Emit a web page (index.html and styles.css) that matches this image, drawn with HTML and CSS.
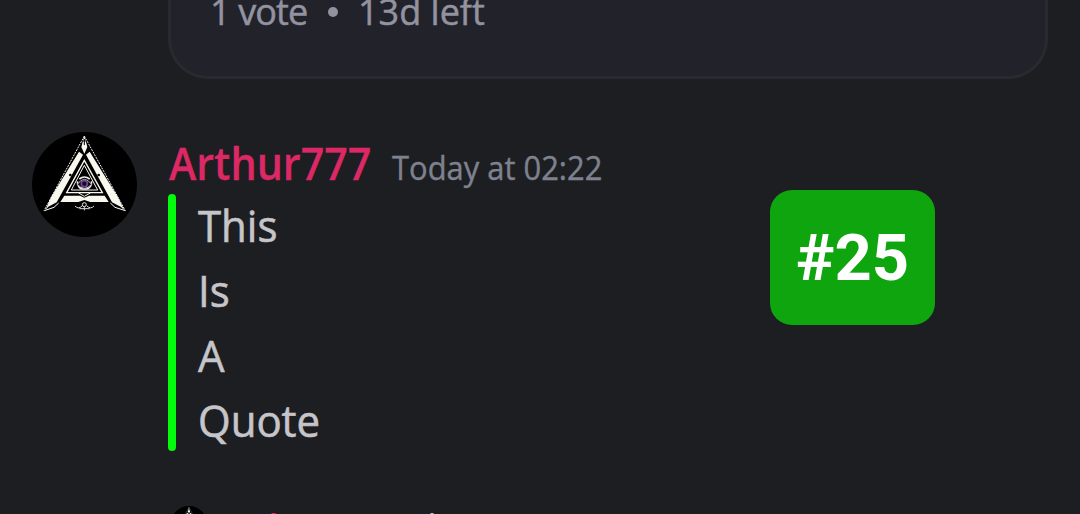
FILE: index.html
```html
<!DOCTYPE html>
<html lang="en">
<head>
<meta charset="utf-8">
<title>Chat</title>
<link rel="stylesheet" href="styles.css">
</head>
<body>
<main class="chat">
  <section class="poll"><span class="votes">1 vote</span><i class="dot"></i><span class="left">13d left</span></section>
  <article class="message">
    <svg class="avatar" viewBox="24 24 315 315">
      <defs>
        <g id="emblem">
          <circle cx="181.500" cy="181.500" r="157.500" fill="#000"/>
          <path d="M181 36L60 260M181 36L304 260" fill="none" stroke="#eee" stroke-width="3" stroke-dasharray="6 3"/>
          <path d="M181 35L190 69L181 89L172 69Z" fill="#f8f8ee"/>
          <path d="M181 45V63M177 51H185" stroke="#000" stroke-width="3"/>
          <path d="M165 83L177 92L98 235L73 248L64 259L81 220Z" fill="#f8f8ee"/>
          <path d="M197 83L186 92L264 235L290 248L301 259L282 220Z" fill="#f8f8ee"/>
          <path d="M61 260L90 250L104 237M304 260L273 250L259 237" fill="none" stroke="#fff" stroke-width="3"/>
          <path d="M121 215H168L181 221L195 215H242L254 234H199L181 228L163 234H109Z" fill="#f8f8ee"/>
          <path d="M181 109L128 206H235Z" fill="none" stroke="#f8f8ee" stroke-width="4"/>
          <path d="M181 124L142 198H221Z" fill="none" stroke="#f8f8ee" stroke-width="3"/>
          <path d="M166 165Q181 153 197 165M160 172Q162 194 177 195H187Q202 194 203 172" fill="none" stroke="#eee" stroke-width="5"/>
          <path d="M160 181Q181 151 203 181Q181 205 160 181Z" fill="#0c0714" stroke="#c9bcd1" stroke-width="3"/>
          <circle cx="181" cy="179" r="9" fill="#160822" stroke="#70458d" stroke-width="5"/>
          <path d="M164 207L181 217L199 207" fill="none" stroke="#eee" stroke-width="3"/>
          <circle cx="139" cy="153" r="4"/><circle cx="224" cy="153" r="4"/>
          <circle cx="181" cy="242" r="6" fill="none" stroke="#eee" stroke-width="3"/>
          <path d="M153 246Q163 257 174 246M189 246Q200 257 210 246M166 254H197M181 248V259" fill="none" stroke="#ddd" stroke-width="3"/>
        </g>
      </defs>
      <use href="#emblem"/>
    </svg>
    <div class="content">
      <header class="head"><span class="name">Arthur777</span><time class="time">Today at 02:22</time></header>
      <blockquote class="quote">
        <i class="bar"></i>
        <div class="lines"><p>This</p><p>Is</p><p>A</p><p>Quote</p></div>
      </blockquote>
    </div>
    <div class="badge"><span>#25</span></div>
  </article>
  <article class="reply">
    <svg class="mini" viewBox="24 24 315 315"><use href="#emblem"/></svg>
    <span class="rname">Arthur777</span><span class="rtext">and</span>
  </article>
</main>
</body>
</html>
```
FILE: styles.css
```css
* { box-sizing: border-box; }
body { margin: 0; background: #1d1e22; font-family: "Open Sans", "Noto Sans", sans-serif; }
p, blockquote { margin: 0; }
.chat { width: 1080px; height: 514px; overflow: hidden; display: flex; flex-direction: column; white-space: nowrap; }
.poll { flex: none; width: 880px; height: 79px; margin-left: 168px; padding-left: 39px; display: flex; background: #22222b; border: 3px solid #292a2f; border-top: 0; border-radius: 0 0 40px 40px; color: #9393a0; font-size: 36px; line-height: 48px; -webkit-text-stroke: 0.5px; }
.poll span { margin-top: -12px; }
.votes { width: 98px; letter-spacing: -0.9px; }
.dot { width: 10px; height: 10px; margin: 7px 20px 0 20px; border-radius: 50%; background: #9393a0; }
.left { letter-spacing: 0; }
.message { flex: none; height: 374px; margin-top: 53px; padding-left: 32px; display: flex; align-items: flex-start; }
.avatar { width: 105px; height: 105px; flex: none; }
.content { width: 602px; margin-left: 31px; }
.head { height: 62px; display: flex; align-items: baseline; line-height: 62px; }
.name { width: 223px; font-size: 45px; font-weight: 600; color: #dc2864; transform: scaleX(.917); transform-origin: 0 0; margin-left: 1px; -webkit-text-stroke: 0.3px; }
.time { font-size: 33px; color: #7e828e; transform: scaleX(.937); transform-origin: 0 0; -webkit-text-stroke: 0.4px; }
.quote { height: 257px; display: flex; gap: 22px; color: #c5c5ca; font-size: 44.5px; line-height: 65px; -webkit-text-stroke: 0.6px; }
.bar { width: 8px; height: 257px; border-radius: 4px; background: #03fc0b; }
.lines { margin-top: -2px; transform: scaleX(.943); transform-origin: 0 0; }
.badge { width: 165px; height: 135px; margin-top: 58px; padding-top: 2px; border-radius: 22px; background: #0fa50f; color: #fff; display: flex; align-items: center; justify-content: center; font: 700 65px/1 Roboto, sans-serif; }
.reply { flex: none; height: 60px; display: flex; padding-left: 171px; font-size: 35px; line-height: 39px; }
.mini { width: 36px; height: 36px; }
.rname { width: 156px; margin-left: 13px; color: #dc2864; font-weight: 600; letter-spacing: -1.2px; }
.rtext { color: #c5c5ca; letter-spacing: -1px; }
```
